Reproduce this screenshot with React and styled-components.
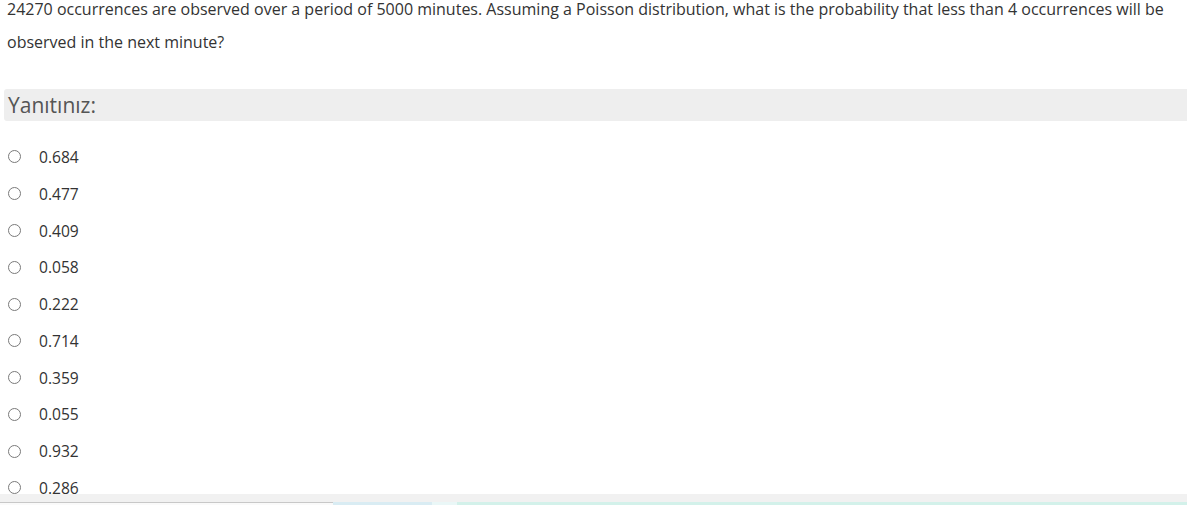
import React from 'react';
import styled, {createGlobalStyle} from 'styled-components';

const Global = createGlobalStyle`
    html, body {
        margin: 0;
        padding: 0;
        background: #fff;
        overflow: hidden;
    }
    body {
        font-family: "Open Sans", "Noto Sans", sans-serif;
        color: #333;
    }
`;

const Page = styled.div`
    width: 1187px;
    height: 505px;
    overflow: hidden;
    display: flex;
    flex-direction: column;
    & > * {
        flex: none;
    }
`;

const Question = styled.p`
    margin: -7px 0 0 0;
    padding: 0 0 0 7px;
    font-size: 16px;
    line-height: 33px;
    color: #333;
`;

const Prompt = styled.div`
    margin: 30px 0 0 4px;
    height: 32px;
    background: #eee;
    border-radius: 3px 0 0 3px;
    display: flex;
    align-items: center;
    padding-left: 4px;
    font-size: 21px;
    color: #555;
`;

const Options = styled.div`
    display: flex;
    flex-direction: column;
    margin-top: 17.6px;
`;

const Option = styled.label`
    display: flex;
    align-items: center;
    height: 36.78px;
    flex: none;
    padding-left: 8px;
    font-size: 15.6px;
    color: #333;
`;

const Circle = styled.span`
    width: 11px;
    height: 11px;
    border: 1px solid #7a7a7a;
    border-radius: 50%;
    background: #fff;
    flex: none;
`;

const Value = styled.span`
    margin-left: 18px;
`;

// sticky bar at the bottom of the window, lies over the last answer
const Footer = styled.div`
    position: fixed;
    left: 0;
    right: 0;
    bottom: 0;
    height: 11px;
    background: #f1f1f1;
    display: flex;
    align-items: flex-end;
`;

const Strip = styled.div`
    height: 2px;
    width: ${p => p.w ? p.w + 'px' : 'auto'};
    flex: ${p => p.w ? 'none' : '1'};
    background: ${p => p.c};
    border-top: 1px solid ${p => p.b || p.c};
`;

const answers = ['0.684', '0.477', '0.409', '0.058', '0.222', '0.714', '0.359', '0.055', '0.932', '0.286'];

export default function App() {
    return (
        <>
            <Global />
            <Page>
                <Question>
                    24270 occurrences are observed over a period of 5000 minutes. Assuming a Poisson distribution, what is the probability that less than 4 occurrences will be observed in the next minute?
                </Question>
                <Prompt>Yanıtınız:</Prompt>
                <Options>
                    {answers.map(a => (
                        <Option key={a}>
                            <Circle />
                            <Value>{a}</Value>
                        </Option>
                    ))}
                </Options>
            </Page>
            <Footer>
                <Strip w={333} c="#fafafa" b="#c8c8c8" />
                <Strip w={99} c="#d9ecf3" />
                <Strip w={25} c="#eaf7f7" />
                <Strip c="#d3f1ea" />
            </Footer>
        </>
    );
}
